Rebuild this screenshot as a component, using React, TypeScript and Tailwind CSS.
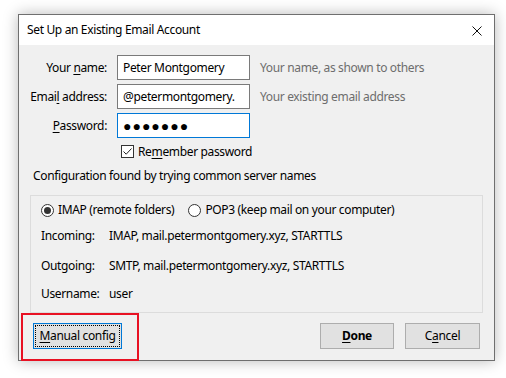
import React from "react";

const font = { fontFamily: '"Noto Sans", "Segoe UI", sans-serif' };

function U({ children }: { children: React.ReactNode }) {
  return <span className="underline underline-offset-[2px] decoration-[1px]">{children}</span>;
}

function Field({ label, value, hint, focused }: { label: React.ReactNode; value: React.ReactNode; hint?: string; focused?: boolean }) {
  return (
    <div className="flex items-center h-[25px]">
      <div className="w-[88px] text-right text-black">{label}</div>
      <div
        className={`ml-[10px] w-[133px] h-[25px] bg-white border flex items-center pl-[5px] overflow-hidden whitespace-nowrap ${
          focused ? "border-[#0078d7]" : "border-[#7a7a7a]"
        }`}
      >
        {value}
      </div>
      {hint && <div className="ml-[10px] text-[#6d6d6d]">{hint}</div>}
    </div>
  );
}

function Radio({ checked }: { checked?: boolean }) {
  return (
    <span className="w-[13px] h-[13px] rounded-full border border-[#333] bg-white flex items-center justify-center shrink-0">
      {checked && <span className="w-[7px] h-[7px] rounded-full bg-[#333]" />}
    </span>
  );
}

export default function App() {
  return (
    <div className="w-[506px] h-[378px] bg-white pt-[14px] pl-[18px] text-[12px] leading-[16px] tracking-[-0.35px]" style={font}>
      <div className="relative w-[477px] h-[347px] border border-[#6f6f6f] flex flex-col shadow-[0_0_14px_rgba(0,0,0,0.28)] bg-[#f0f0f0]">
        <div className="h-[30px] bg-white flex items-center pl-[8px] pr-[12px] shrink-0">
          <span className="flex-1 text-black">Set Up an Existing Email Account</span>
          <svg width="10" height="10" viewBox="0 0 10 10" className="mt-[1px]">
            <path d="M0.5 0.5 L9.5 9.5 M9.5 0.5 L0.5 9.5" stroke="#111" strokeWidth="1" />
          </svg>
        </div>
        <div className="flex-1 flex flex-col">
          <div className="mt-[10px] flex flex-col gap-[4px]">
            <Field label={<>Your <U>n</U>ame:</>} value="Peter Montgomery" hint="Your name, as shown to others" />
            <Field label={<>Emai<U>l</U> address:</>} value="@petermontgomery." hint="Your existing email address" />
            <Field
              label={<><U>P</U>assword:</>}
              value={<span className="tracking-[1px] text-[14px]">●●●●●●●</span>}
              focused
            />
          </div>
          <div className="mt-[7px] ml-[102px] flex items-center h-[13px] gap-[4px]">
            <span className="w-[13px] h-[13px] border border-[#333] bg-white flex items-center justify-center">
              <svg width="11" height="11" viewBox="0 0 11 11">
                <path d="M1.5 5.5 L4.2 8.2 L9.5 2.5" fill="none" stroke="#222" strokeWidth="1" />
              </svg>
            </span>
            <span>Re<U>m</U>ember password</span>
          </div>
          <div className="mt-[10px] ml-[14px] h-[16px]">Configuration found by trying common server names</div>
          <div className="mt-[11px] ml-[11px] w-[453px] h-[118px] border border-[#dcdcdc] flex flex-col pl-[10px]">
            <div className="mt-[6px] flex items-center h-[16px]">
              <Radio checked />
              <span className="ml-[4px]">IMAP (remote folders)</span>
              <span className="ml-[14px]"><Radio /></span>
              <span className="ml-[4px]">POP3 (keep mail on your computer)</span>
            </div>
            <div className="mt-[10px] flex h-[16px]">
              <span className="w-[68px]">Incoming:</span>
              <span>IMAP, mail.petermontgomery.xyz, STARTTLS</span>
            </div>
            <div className="mt-[14px] flex h-[16px]">
              <span className="w-[68px]">Outgoing:</span>
              <span>SMTP, mail.petermontgomery.xyz, STARTTLS</span>
            </div>
            <div className="mt-[12px] flex h-[16px]">
              <span className="w-[68px]">Username:</span>
              <span>user</span>
            </div>
          </div>
          <div className="mt-[10px] flex items-center px-[14px]">
            <div className="w-[89px] h-[26px] border border-[#0078d7] bg-[#e1e1e1] p-[1px]">
              <div className="w-full h-full border border-dotted border-black flex items-center justify-center">
                <span><U>M</U>anual config</span>
              </div>
            </div>
            <div className="flex-1" />
            <div className="w-[74px] h-[26px] border border-[#adadad] bg-[#e1e1e1] flex items-center justify-center font-bold">
              <span><U>D</U>one</span>
            </div>
            <div className="ml-[11px] w-[75px] h-[26px] border border-[#adadad] bg-[#e1e1e1] flex items-center justify-center">
              <span>C<U>a</U>ncel</span>
            </div>
          </div>
        </div>
        <div className="absolute left-[2px] top-[298px] w-[118px] h-[48px] border-2 border-[#e81123]" />
      </div>
    </div>
  );
}
